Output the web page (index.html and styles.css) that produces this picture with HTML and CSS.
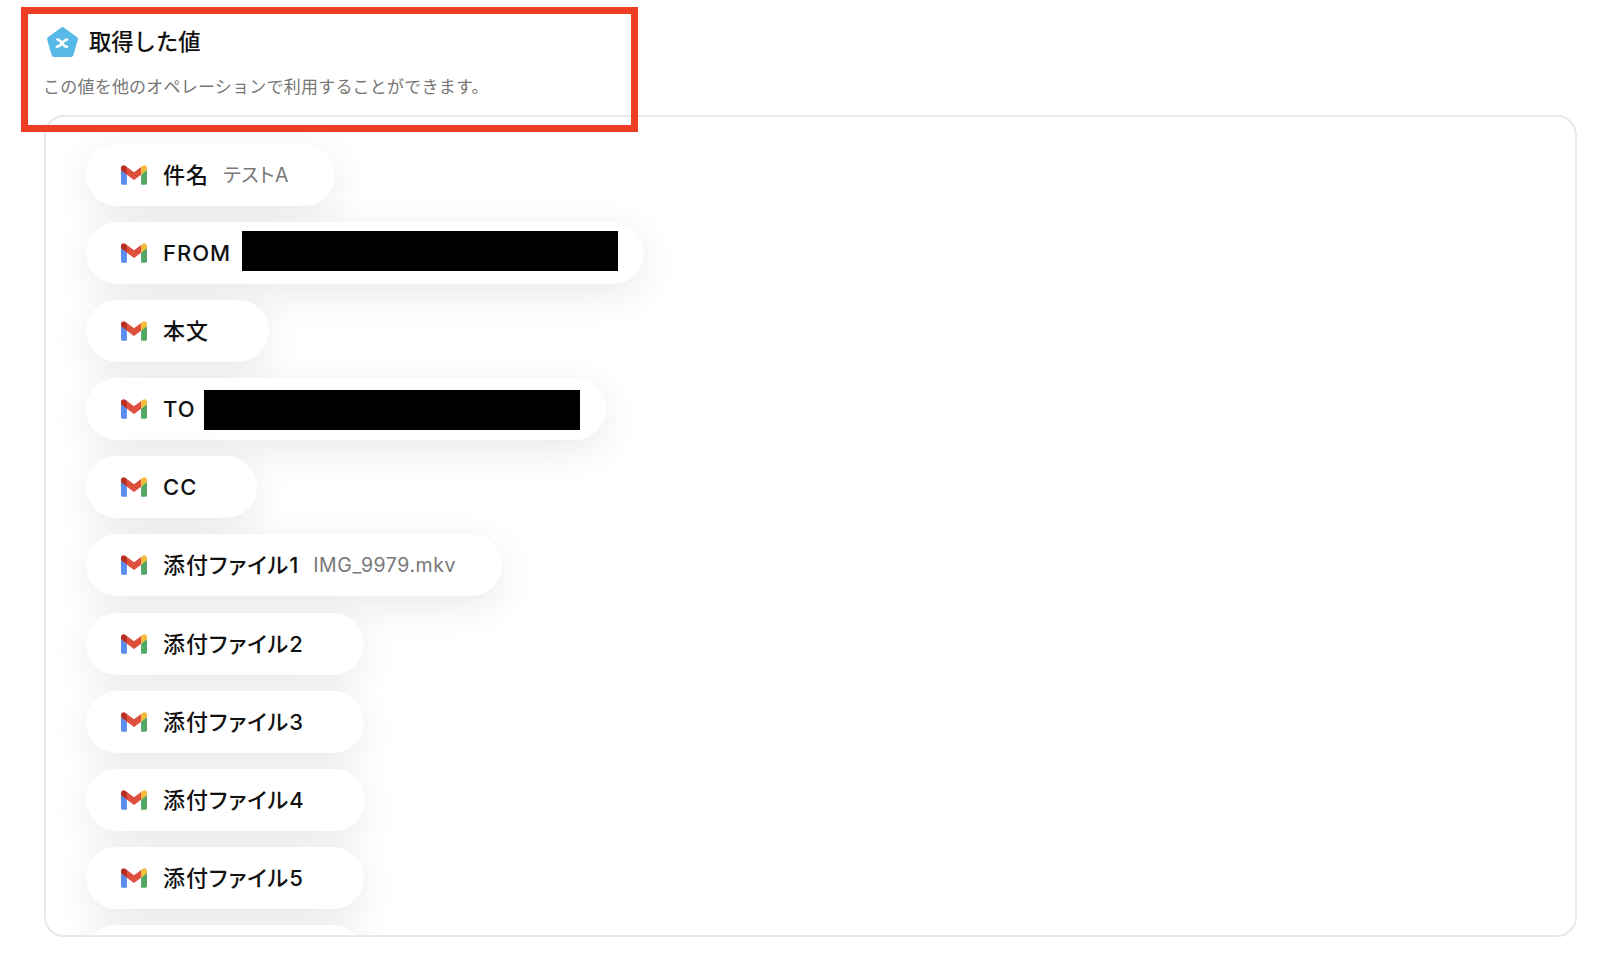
FILE: index.html
```html
<!DOCTYPE html>
<html lang="ja">
<head>
	<meta charset="UTF-8">
	<title>取得した値</title>
	<link rel="stylesheet" href="styles.css">
</head>
<body>
	<svg class="defs" width="0" height="0">
		<symbol id="gmail" viewBox="0 0 256 193">
			<path fill="#5b8def" d="M58.182 192.05V93.14L27.507 65.077 0 49.504v125.091c0 9.658 7.825 17.455 17.455 17.455h40.727z"/>
			<path fill="#52a765" d="M197.818 192.05h40.727c9.659 0 17.455-7.826 17.455-17.455V49.505l-31.156 17.837-27.026 25.798v98.91z"/>
			<path fill="#de4f3d" d="M58.182 93.14l-4.174-38.647 4.174-36.989L128 69.868l69.818-52.364 4.669 34.992-4.669 40.644L128 145.504z"/>
			<path fill="#f2bb3c" d="M197.818 17.504V93.14L256 49.504V26.231c0-21.585-24.64-33.89-41.89-20.945l-16.292 12.218z"/>
			<path fill="#b92d22" d="M0 49.504l26.759 20.07L58.182 93.14V17.504L41.89 5.286C24.61-7.66 0 4.646 0 26.23v23.273z"/>
		</symbol>
	</svg>
	<div class="frame"></div>
	<header class="head">
		<div class="head_title">
			<svg class="head_icon" viewBox="0 0 32 32">
				<path fill="#56b9e8" stroke="#56b9e8" stroke-width="4" stroke-linejoin="round" d="M16 3 L29 12.5 L24.5 28 L7.5 28 L3 12.5 Z"/>
				<path fill="none" stroke="#fff" stroke-width="2.4" stroke-linecap="round" d="M11 13 C15 12.5 15.5 20.5 20.5 20 M20.5 13 C16.5 13 15 20 10.5 20"/>
			</svg>
			<h1>取得した値</h1>
		</div>
		<p class="head_desc">この値を他のオペレーションで利用することができます。</p>
	</header>
	<main class="card">
		<div class="pill"><svg class="gmail"><use href="#gmail"/></svg><span class="name">件名</span><span class="value">テストA</span></div>
		<div class="pill"><svg class="gmail"><use href="#gmail"/></svg><span class="name">FROM</span><span class="mask mask_from"></span></div>
		<div class="pill"><svg class="gmail"><use href="#gmail"/></svg><span class="name">本文</span><span class="value"></span></div>
		<div class="pill"><svg class="gmail"><use href="#gmail"/></svg><span class="name">TO</span><span class="mask mask_to"></span></div>
		<div class="pill"><svg class="gmail"><use href="#gmail"/></svg><span class="name">CC</span><span class="value"></span></div>
		<div class="pill"><svg class="gmail"><use href="#gmail"/></svg><span class="name">添付ファイル1</span><span class="value">IMG_9979.mkv</span></div>
		<div class="pill"><svg class="gmail"><use href="#gmail"/></svg><span class="name">添付ファイル2</span><span class="value"></span></div>
		<div class="pill"><svg class="gmail"><use href="#gmail"/></svg><span class="name">添付ファイル3</span><span class="value"></span></div>
		<div class="pill"><svg class="gmail"><use href="#gmail"/></svg><span class="name">添付ファイル4</span><span class="value"></span></div>
		<div class="pill"><svg class="gmail"><use href="#gmail"/></svg><span class="name">添付ファイル5</span><span class="value"></span></div>
		<div class="pill pill_cut"></div>
	</main>
</body>
</html>
```
FILE: styles.css
```css
*{margin:0;padding:0;box-sizing:border-box;}
html,body{height:100%;overflow:hidden;}
body{background:#fff;color:#111;font-family:Inter,"Noto Sans CJK JP",sans-serif;}
.defs{display:block;}

/* red note on top of the header */
.frame{position:absolute;left:21px;top:7px;width:617px;height:125px;border:7px solid #ee3d22;}

.head{height:115px;padding:26px 0 0 43px;}
.head_title{display:flex;align-items:center;gap:10px;margin-left:3px;height:32px;}
.head_icon{width:33px;height:33px;flex:none;}
.head_title h1{font-size:22.3px;font-weight:500;line-height:32px;}
.head_desc{margin-top:17px;font-size:17px;letter-spacing:.22px;line-height:24px;color:#777;}

.card{margin:0 23px 0 44px;height:822px;padding:27px 0 0 39.5px;border:2px solid #e8e8e8;border-radius:20px;overflow:hidden;display:flex;flex-direction:column;align-items:flex-start;gap:16.1px;}
.pill{height:62px;flex:none;display:flex;align-items:center;padding:0 46px 0 35.5px;background:#fff;border-radius:31px;box-shadow:0 10px 40px rgba(0,0,0,.09);}
.pill_cut{width:278px;}
.gmail{width:26px;height:20px;flex:none;margin-right:16px;}
.name{font-size:22px;font-weight:500;letter-spacing:1px;font-feature-settings:"palt";line-height:32px;white-space:nowrap;}
.value{margin-left:14px;font-size:19.5px;letter-spacing:.55px;font-feature-settings:"palt";line-height:32px;color:#777;white-space:nowrap;}

/* redaction boxes sit a little off the pill centre */
.mask{width:376px;height:40px;margin-right:-20px;background:#000;}
.mask_from{margin-left:11px;margin-bottom:5px;}
.mask_to{margin-left:8px;margin-top:2px;}
```
